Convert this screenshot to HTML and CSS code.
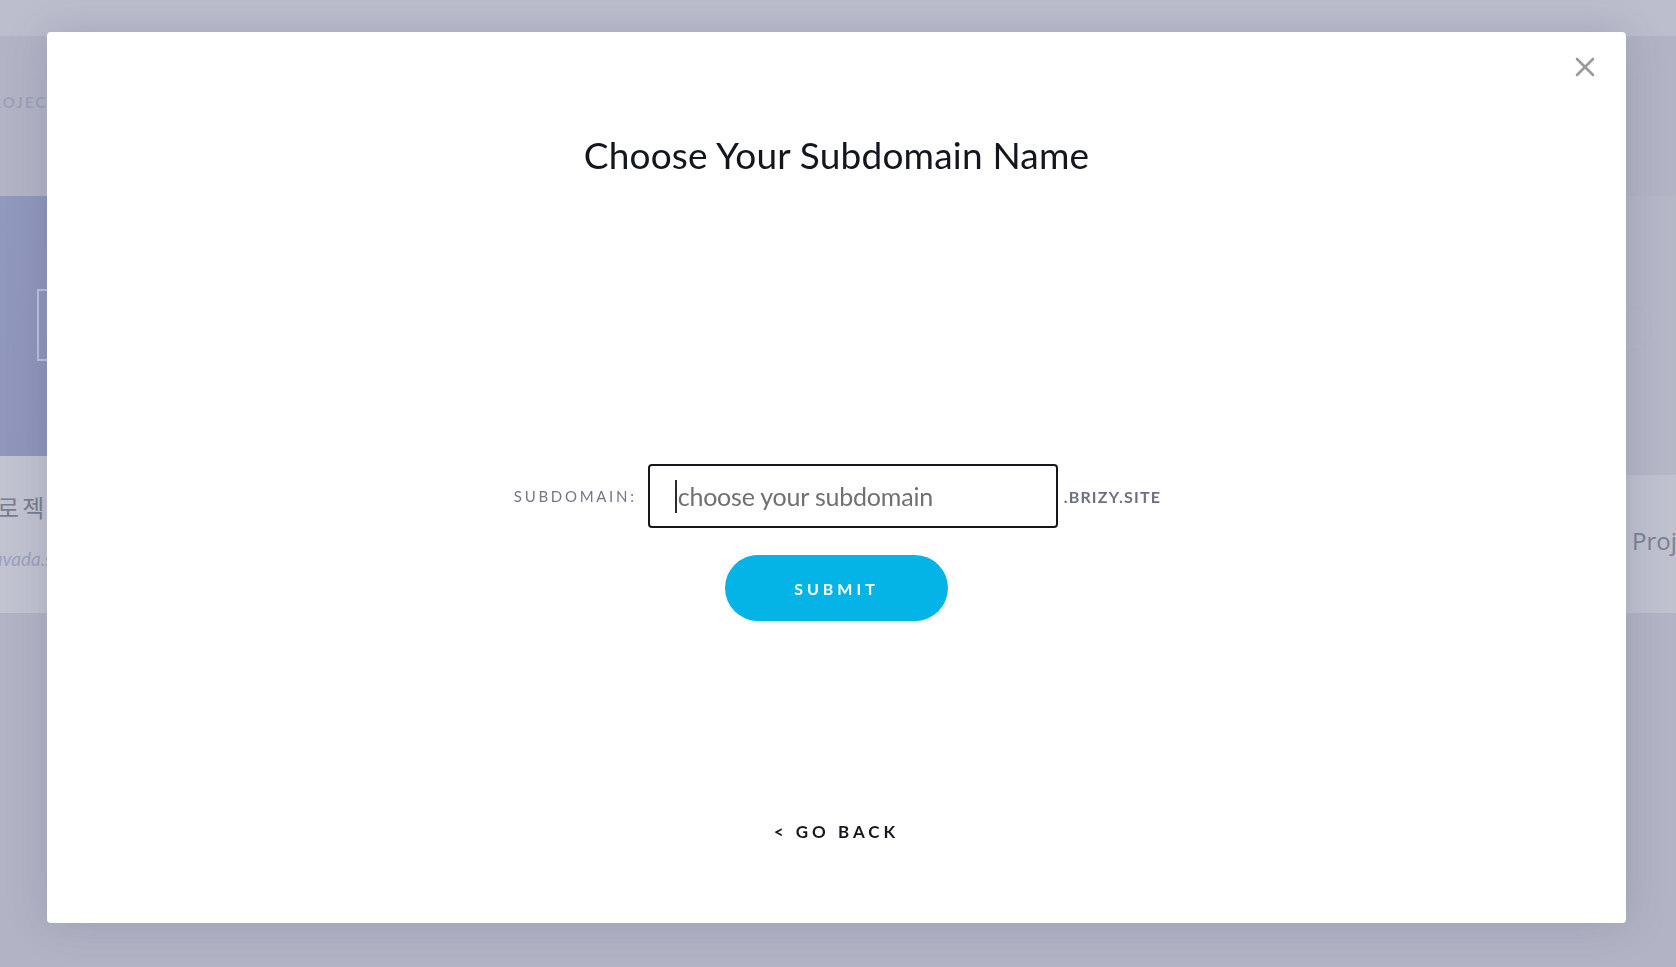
FILE: index.html
```html
<!DOCTYPE html>
<html lang="en">
<head>
<meta charset="utf-8">
<title>Choose Your Subdomain Name</title>
<link rel="stylesheet" href="styles.css">
</head>
<body>
<div class="page">
  <div class="topbar"></div>
  <div class="section-head"><span class="section-title">MY PROJECTS</span></div>
  <div class="cards">
    <div class="card card-left">
      <div class="card-img">
        <span class="card-icon"></span>
      </div>
      <div class="card-body">
        <div class="card-name">프로젝트</div>
        <div class="card-url">mysite.avada.site</div>
      </div>
    </div>
    <div class="card card-right">
      <div class="card-img card-img-right">
        <span class="card-circle"></span>
      </div>
      <div class="card-body">
        <div class="card-name-en">Project</div>
      </div>
    </div>
  </div>
</div>

<div class="overlay">
  <div class="modal">
    <button class="close" aria-label="Close">
      <svg width="20" height="20" viewBox="0 0 20 20"><path d="M2 2 L18 18 M18 2 L2 18" stroke="#9a9a9a" stroke-width="2.6" stroke-linecap="round" fill="none"/></svg>
    </button>
    <h1 class="title">Choose Your Subdomain Name</h1>
    <form class="form">
      <div class="row">
        <label class="label" for="sub">SUBDOMAIN:</label>
        <div class="field">
          <input id="sub" class="input" type="text" placeholder="choose your subdomain">
          <span class="caret"></span>
        </div>
        <span class="suffix">.BRIZY.SITE</span>
      </div>
      <button type="button" class="submit">SUBMIT</button>
    </form>
    <a class="back" href="#">&lt; GO BACK</a>
  </div>
</div>
</body>
</html>
```

FILE: styles.css
```css
* { box-sizing: border-box; }
html, body { margin: 0; padding: 0; }
body {
  width: 1676px;
  height: 967px;
  overflow: hidden;
  background: #b2b4c5;
  font-family: Lato, "Liberation Sans", sans-serif;
}

/* background page (already dimmed) */
.page { display: flex; flex-direction: column; height: 967px; overflow: hidden; }
.topbar { height: 36px; background: #bcbecd; }
.section-head { height: 160px; padding-top: 57px; }
.section-title {
  display: block;
  white-space: nowrap;
  margin-left: -53px;
  font-size: 15px;
  letter-spacing: 2px;
  font-weight: 700;
  color: #9da1ba;
}
.cards { display: flex; justify-content: space-between; }
.card { width: 300px; display: flex; flex-direction: column; }
.card-left { margin-left: -253px; }
.card-right { margin-right: -250px; }
.card-img {
  height: 260px;
  background: linear-gradient(100deg, #97a6c9 0%, #8f94ba 100%);
  position: relative;
}
.card-img-right { height: 280px; background: #b5b7c7; border-bottom: 1px solid #c0c2cf; }
.card-icon {
  position: absolute;
  left: 290px;
  top: 93px;
  width: 22px;
  height: 72px;
  border: 2px solid #b9c2dc;
}
.card-circle {
  position: absolute;
  left: -20px;
  top: 110px;
  width: 46px;
  height: 46px;
  border-radius: 50%;
  border: 2px solid #b0b4ca;
  opacity: 0.6;
}
.card-body {
  height: 157px;
  background: #c1c3d0;
  padding: 36px 0 0 0;
  white-space: nowrap;
}
.card-right .card-body { height: 137px; padding: 49px 0 0 6px; background: #bfc1cf; }
.card-name {
  font-family: "Noto Sans CJK KR", "Noto Sans", sans-serif;
  font-size: 24px;
  letter-spacing: 3px;
  color: #7a7d90;
  margin-left: 225px;
  line-height: 30px;
}
.card-url {
  font-style: italic;
  font-size: 19px;
  color: #9ba1bd;
  margin-top: 25px;
  margin-left: 190px;
}
.card-name-en { font-family: "Open Sans", sans-serif; font-size: 24px; line-height: 32px; color: #7c7f92; }

/* modal overlay */
.overlay {
  position: fixed;
  inset: 0;
  padding: 32px 0 0 47px;
}
.modal {
  position: relative;
  width: 1579px;
  height: 891px;
  background: #ffffff;
  border-radius: 4px;
  box-shadow: 0 0 40px rgba(70, 72, 110, 0.22);
  display: flex;
  flex-direction: column;
  align-items: center;
  padding-top: 103px;
}
.close {
  position: absolute;
  top: 25px;
  right: 31px;
  width: 20px;
  height: 20px;
  padding: 0;
  border: 0;
  background: none;
  display: flex;
}
.title {
  margin: 0;
  font-family: Lato, "Liberation Sans", sans-serif;
  font-weight: 400;
  font-size: 37px;
  line-height: 40px;
  color: #13151f;
  letter-spacing: 0.2px;
}
.form {
  margin-top: 289px;
  display: flex;
  flex-direction: column;
  align-items: center;
}
.row { display: flex; align-items: center; margin-left: 2px; }
.label {
  font-size: 15px;
  letter-spacing: 2.7px;
  color: #73768a;
  margin-right: 11px;
}
.field { position: relative; }
.input {
  width: 410px;
  height: 64px;
  border: 2px solid #15171c;
  border-radius: 4px;
  padding: 0 0 0 28px;
  font-family: Lato, "Liberation Sans", sans-serif;
  font-size: 25px;
  letter-spacing: -0.2px;
  color: #333;
  outline: none;
  background: #fff;
}
.input::placeholder { color: #707070; }
.caret {
  position: absolute;
  left: 27px;
  top: 16px;
  width: 2px;
  height: 33px;
  background: #2a2a2a;
}
.suffix {
  margin-left: 6px;
  font-size: 16px;
  font-weight: 700;
  letter-spacing: 1.2px;
  color: #6d7082;
}
.submit {
  margin-top: 27px;
  width: 223px;
  height: 66px;
  border: 0;
  border-radius: 33px;
  background: #04b4e6;
  color: #fff;
  font-family: Lato, "Liberation Sans", sans-serif;
  font-weight: 700;
  font-size: 16px;
  letter-spacing: 4px;
  padding-left: 6px;
}
.back {
  margin-top: 201px;
  font-size: 17px;
  line-height: 20px;
  letter-spacing: 4px;
  color: #16181f;
  text-decoration: none;
  font-weight: 700;
  padding-left: 0;
}
```
